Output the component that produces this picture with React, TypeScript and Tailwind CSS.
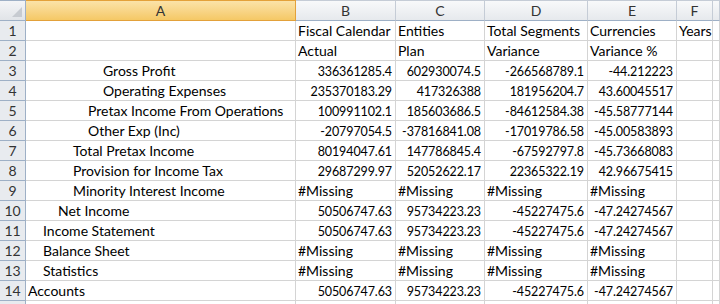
import React from 'react'

type Row = {
  label: string
  level: number
  values: string[]
}

const COLS = ['A', 'B', 'C', 'D', 'E', 'F', '']

const HEAD_1 = ['Fiscal Calendar', 'Entities', 'Total Segments', 'Currencies', 'Years']
const HEAD_2 = ['Actual', 'Plan', 'Variance', 'Variance %', '']

const ROWS: Row[] = [
  { label: 'Gross Profit', level: 5, values: ['336361285.4', '602930074.5', '-266568789.1', '-44.212223'] },
  { label: 'Operating Expenses', level: 5, values: ['235370183.29', '417326388', '181956204.7', '43.60045517'] },
  { label: 'Pretax Income From Operations', level: 4, values: ['100991102.1', '185603686.5', '-84612584.38', '-45.58777144'] },
  { label: 'Other Exp (Inc)', level: 4, values: ['-20797054.5', '-37816841.08', '-17019786.58', '-45.00583893'] },
  { label: 'Total Pretax Income', level: 3, values: ['80194047.61', '147786845.4', '-67592797.8', '-45.73668083'] },
  { label: 'Provision for Income Tax', level: 3, values: ['29687299.97', '52052622.17', '22365322.19', '42.96675415'] },
  { label: 'Minority Interest Income', level: 3, values: ['#Missing', '#Missing', '#Missing', '#Missing'] },
  { label: 'Net Income', level: 2, values: ['50506747.63', '95734223.23', '-45227475.6', '-47.24274567'] },
  { label: 'Income Statement', level: 1, values: ['50506747.63', '95734223.23', '-45227475.6', '-47.24274567'] },
  { label: 'Balance Sheet', level: 1, values: ['#Missing', '#Missing', '#Missing', '#Missing'] },
  { label: 'Statistics', level: 1, values: ['#Missing', '#Missing', '#Missing', '#Missing'] },
  { label: 'Accounts', level: 0, values: ['50506747.63', '95734223.23', '-45227475.6', '-47.24274567'] },
]

const INDENT = ['pl-[2px]', 'pl-[17px]', 'pl-[32px]', 'pl-[47px]', 'pl-[62px]', 'pl-[77px]']

const cell =
  'h-[20px] border-r border-b border-[#d4d4d4] flex items-end pb-[2px] whitespace-nowrap overflow-hidden'

const rowHead =
  'h-[20px] border-r border-b border-[#9eb0c6] bg-[#e8ebef] flex items-end justify-center pb-[2px] text-[#333]'

const Corner = () => (
  <div className="h-[21px] border-r border-b border-t border-[#9eb0c6] bg-gradient-to-b from-[#f4f5f7] to-[#e1e4e8] relative">
    <svg width="10" height="10" className="absolute right-[3px] bottom-[3px]">
      <polygon points="10,0 10,10 0,10" fill="#c7cbd1" />
    </svg>
  </div>
)

const isText = (v: string) => v.startsWith('#')

const App = () => {
  return (
    <div
      className="w-[720px] h-[304px] overflow-hidden bg-white text-black text-[14px] leading-none"
      style={{ fontFamily: 'Lato, "Liberation Sans", sans-serif' }}
    >
      <div className="grid grid-cols-[26px_270px_100px_89px_103px_89px_36px_1fr]">
        <Corner />
        {COLS.map((c, i) => (
          <div
            key={'h' + i}
            className={
              i === 0
                ? 'h-[21px] border-r border-b border-t border-[#e3a13a] bg-gradient-to-b from-[#fbe3a8] to-[#f5c865] flex items-center justify-center text-[#333]'
                : 'h-[21px] border-r border-b border-t border-[#c5ccd6] border-b-[#9eb0c6] bg-gradient-to-b from-[#f8f9fa] to-[#e6e9ed] flex items-center justify-center text-[#333]'
            }
          >
            {c}
          </div>
        ))}

        <div className={rowHead}>1</div>
        <div className={cell} />
        {HEAD_1.map((t, i) => (
          <div key={'a' + i} className={cell + ' pl-[2px]'}>
            {t}
          </div>
        ))}
        <div className={cell} />

        <div className={rowHead}>2</div>
        <div className={cell} />
        {HEAD_2.map((t, i) => (
          <div key={'b' + i} className={cell + ' pl-[2px]'}>
            {t}
          </div>
        ))}
        <div className={cell} />

        {ROWS.map((r, ri) => (
          <React.Fragment key={r.label}>
            <div className={rowHead}>{ri + 3}</div>
            <div className={cell + ' ' + INDENT[r.level]}>{r.label}</div>
            {r.values.map((v, vi) => (
              <div
                key={vi}
                className={
                  cell +
                  (isText(v)
                    ? ' pl-[2px]'
                    : ' justify-end pr-[3px] text-[12.5px] tracking-[-0.1px]')
                }
              >
                {v}
              </div>
            ))}
            <div className={cell} />
            <div className={cell} />
          </React.Fragment>
        ))}

        <div className={rowHead} />
        {COLS.map((_, i) => (
          <div key={'z' + i} className={cell} />
        ))}
      </div>
    </div>
  )
}

export default App
